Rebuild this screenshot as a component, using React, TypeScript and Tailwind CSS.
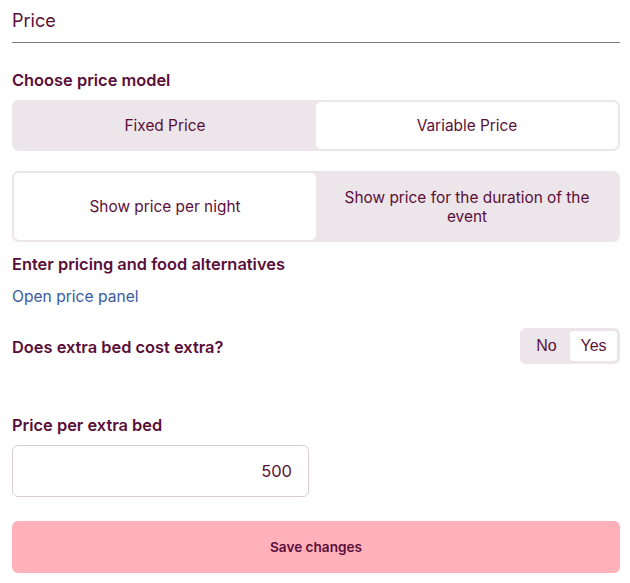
import React from "react";

export default function App() {
  const c = "text-[#5a0f3a]";
  return (
    <div className={`w-[630px] min-h-[583px] bg-white pl-3 pr-[10px] ${c}`} style={{ fontFamily: "Inter, 'Noto Sans', sans-serif" }}>
      <div className="pt-[9px] pb-[9px] border-b border-[#7a7a7a] text-[18px] leading-[24px]">Price</div>

      <div className="mt-[26px] text-[16.4px] leading-[22px] font-semibold">Choose price model</div>
      <div className="mt-[9px] h-[51px] rounded-[7px] bg-[#ece5e9] p-[2px] grid grid-cols-2">
        <div className="flex items-center justify-center text-[15.4px]">Fixed Price</div>
        <div className="flex items-center justify-center text-[15.4px] bg-white rounded-[5px]">Variable Price</div>
      </div>

      <div className="mt-[20px] h-[71px] rounded-[7px] bg-[#ece5e9] p-[2px] grid grid-cols-2">
        <div className="flex items-center justify-center text-[15.4px] bg-white rounded-[5px]">Show price per night</div>
        <div className="flex items-center justify-center text-center text-[15.4px] leading-[19px] px-6">Show price for the duration of the event</div>
      </div>

      <div className="mt-[11px] text-[16.4px] leading-[22px] font-semibold">Enter pricing and food alternatives</div>
      <div className="mt-[11px] text-[15.6px] leading-[22px] text-[#3a5a9e]">Open price panel</div>

      <div className="mt-[20px] flex items-center justify-between">
        <div className="pt-[2px] text-[16.4px] leading-[22px] font-semibold">Does extra bed cost extra?</div>
        <div className="h-[36px] w-[100px] rounded-[6px] bg-[#ece5e9] p-[3px] flex" style={{ fontFamily: "'Liberation Sans', Arial, sans-serif" }}>
          <div className="flex-1 flex items-center justify-center text-[16px]">No</div>
          <div className="w-[47px] flex items-center justify-center text-[16px] bg-white rounded-[4px]">Yes</div>
        </div>
      </div>

      <div className="mt-[50px] text-[16.4px] leading-[22px] font-semibold">Price per extra bed</div>
      <div className="mt-[9px] w-[297px] h-[52px] rounded-[6px] border border-[#dccad4] flex items-center justify-end pr-[16px] text-[16.5px]">500</div>

      <button className="mt-[24px] w-full h-[52px] rounded-[6px] bg-[#feb0bb] text-[13.6px] font-semibold text-[#5a0f3a]">Save changes</button>
    </div>
  );
}
